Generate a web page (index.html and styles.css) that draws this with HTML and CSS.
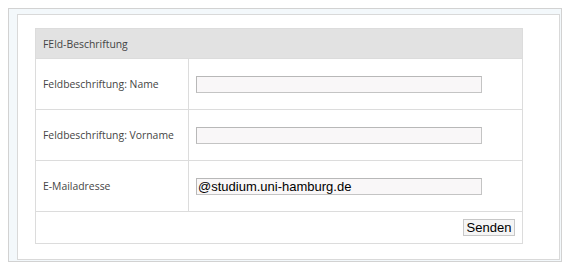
FILE: index.html
```html
<!DOCTYPE html>
<html lang="de">
    <head>
        <meta charset="UTF-8">
        <meta name="viewport" content="width=device-width, initial-scale=1.0">
        <title>Formular</title>
        <link rel="stylesheet" href="styles.css">
    </head>
    <body>
        <div class="frame">
            <div class="panel">
                <form>
                    <table class="form-table">
                        <tr>
                            <th colspan="2">FEld-Beschriftung</th>
                        </tr>
                        <tr>
                            <td class="label">Feldbeschriftung: Name</td>
                            <td class="field"><input type="text" name="name"></td>
                        </tr>
                        <tr>
                            <td class="label">Feldbeschriftung: Vorname</td>
                            <td class="field"><input type="text" name="vorname"></td>
                        </tr>
                        <tr>
                            <td class="label">E-Mailadresse</td>
                            <td class="field"><input type="text" name="email" value="@studium.uni-hamburg.de"></td>
                        </tr>
                        <tr>
                            <td colspan="2" class="actions"><button type="submit" class="btn">Senden</button></td>
                        </tr>
                    </table>
                </form>
            </div>
        </div>
    </body>
</html>
```

FILE: styles.css
```css
body{
    margin: 8px;
    background: #fff;
    font-family: "Open Sans", "Noto Sans", sans-serif;
}
.frame{
    width: 554px;
    height: 254px;
    box-sizing: border-box;
    padding: 5px 1px 1px 8px;
    border: 1px solid #d2d2d2;
    background: #f3f8fb;
    box-shadow: 0 0 4px 1px #bdbdbd;
}
.panel{
    width: 543px;
    height: 246px;
    box-sizing: border-box;
    border: 1px solid #d9d9d9;
    background: #fff;
    padding: 13px 0 0 17px;
}
.form-table{
    width: 488px;
    border-collapse: collapse;
    border: 1px solid #dcdcdc;
    font-size: 10.4px;
    color: #454545;
}
.form-table th{
    height: 29px;
    padding: 0 0 0 7px;
    background: #e2e2e2;
    text-align: left;
    font-weight: normal;
}
.form-table td{
    border-top: 1px solid #dcdcdc;
}
.label{
    width: 145px;
    height: 50px;
    padding: 0 0 0 7px;
    border-right: 1px solid #dcdcdc;
}
.field{
    padding: 0 0 0 7px;
}
.field input{
    display: block;
    width: 286px;
    height: 17px;
    box-sizing: border-box;
    margin: 0;
    padding: 0 1px;
    border: 1px solid #c4c4c4;
    border-top-color: #b8b8b8;
    border-left-color: #b8b8b8;
    background: #f9f7f8;
    font-family: "Liberation Sans", Arial, sans-serif;
    font-size: 13px;
    color: #000;
}
.actions{
    height: 31px;
    padding: 0 7px 0 0;
    text-align: right;
}
.btn{
    width: 52px;
    height: 17px;
    margin: 0;
    padding: 0;
    border: 1px solid #c8c8c8;
    background: #f5f5f5;
    font-family: "Liberation Sans", Arial, sans-serif;
    font-size: 13px;
    color: #000;
    line-height: 15px;
    vertical-align: middle;
}
```
